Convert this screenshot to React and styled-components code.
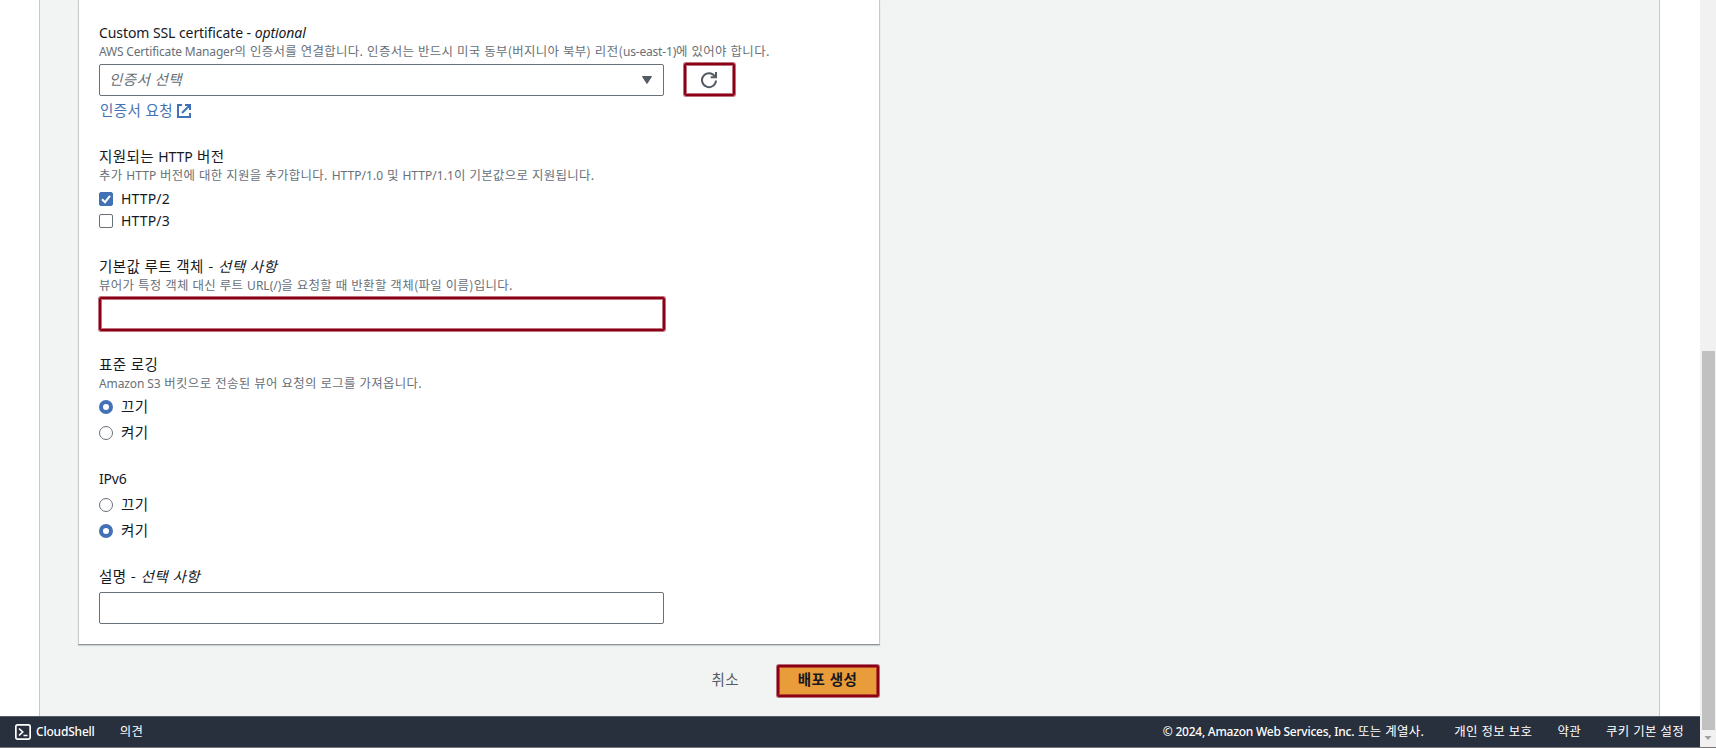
import React from 'react';
import styled, { createGlobalStyle, css } from 'styled-components';

const GlobalStyle = createGlobalStyle`
  * { box-sizing: border-box; }
  body {
    margin: 0;
    overflow: hidden;
    background: #fff;
    color: #16191f;
    font-family: "Noto Sans", "Noto Sans CJK KR", sans-serif;
    font-size: 14px;
  }
`;

const Page = styled.div`
  display: grid;
  grid-template: 716px 31px 1px / 1700px 16px;
  width: 1716px;
  height: 748px;
`;

const Content = styled.main`
  width: 1621px;
  margin-left: 39px;
  padding-left: 39px;
  background: #f2f3f3;
  border: solid #c6c9ca;
  border-width: 0 1px;
  height: 716px;
`;

const Card = styled.section`
  display: flex;
  flex-direction: column;
  align-items: flex-start;
  width: 802px;
  height: 645px;
  margin-left: -1px;
  padding: 23px 0 0 20px;
  background: #fff;
  border: 1px solid #c6cacb;
  border-top: 0;
  border-bottom-color: #8d9299;
  box-shadow: 0 1px 1px rgba(0, 28, 36, 0.15);
`;

const Field = styled.div`
  display: flex;
  flex-direction: column;
  align-items: flex-start;
  height: ${(p) => p.$height}px;
`;

const Gap = styled.div`
  height: ${(p) => p.$height}px;
`;

const Label = styled.div`
  height: 20px;
  line-height: ${(p) => (p.$low ? 22 : 20)}px;
  font-size: 14px;
  white-space: nowrap;
`;

const Hint = styled.div`
  height: ${(p) => p.$height}px;
  line-height: ${(p) => (p.$high ? 18 : 20)}px;
  font-size: 12px;
  color: #687078;
  white-space: nowrap;
`;

const Latin = styled.span`
  letter-spacing: ${(p) => p.$track}px;
  font-weight: ${(p) => p.$weight};
`;

const Hangul = styled.span`
  font-family: "Noto Sans CJK KR", sans-serif;
  font-size: 1.038em;
  line-height: 1;
  letter-spacing: 0.026em;
  word-spacing: 0.05em;
`;

const Optional = styled.span`
  font-style: italic;
`;

function Text({ children, track = -0.1, weight = 'inherit' }) {
  const runs = children.match(/[A-Za-z0-9©][\x21-\x7e ]*[\x21-\x7e]|[^A-Za-z0-9©]+/g);
  return runs.map((run, i) =>
    /^[A-Za-z0-9©]/.test(run) ? (
      <Latin key={i} $track={track} $weight={weight}>{run}</Latin>
    ) : (
      <Hangul key={i}>{run}</Hangul>
    )
  );
}

const InputRow = styled.div`
  display: flex;
  align-items: flex-start;
  gap: 19px;
`;

const Control = styled.div`
  display: flex;
  align-items: center;
  justify-content: space-between;
  width: 565px;
  height: 32px;
  padding: 0 11px 1px 9px;
  border: 1px solid #687078;
  border-radius: 2px;
  color: #687078;
  font-style: italic;
`;

const marked = css`
  border: 2px solid #8b0016;
  border-radius: 2px;
  box-shadow: inset 0 0 0 1px rgba(139, 0, 22, 0.55), 0 0 0 1px rgba(139, 0, 22, 0.55);
`;

const MarkedInput = styled.div`
  width: 566px;
  height: 34px;
  ${marked}
`;

const RefreshButton = styled.div`
  display: flex;
  align-items: center;
  justify-content: center;
  width: 51px;
  height: 33px;
  margin-top: -1px;
  margin-left: 1px;
  padding-right: 1px;
  ${marked}
`;

const LinkRow = styled.div`
  display: flex;
  align-items: center;
  gap: 4px;
  height: 20px;
  margin-top: 4px;
  padding: 1px 0 0 1px;
  line-height: 20px;
  color: #4272b5;
`;

const Choice = styled.div`
  display: flex;
  align-items: center;
  gap: 8px;
  height: ${(p) => p.$height}px;
  line-height: 20px;
`;

const CheckBox = styled.span`
  display: flex;
  width: 14px;
  height: 14px;
  border: 1px solid ${(p) => (p.$on ? '#4272b5' : '#687078')};
  border-radius: 2px;
  background: ${(p) => (p.$on ? '#4272b5' : '#fff')};
`;

const Radio = styled.span`
  width: 14px;
  height: 14px;
  border: ${(p) => (p.$on ? '4px solid #4272b5' : '1px solid #687078')};
  border-radius: 50%;
  background: #fff;
`;

const Actions = styled.div`
  display: flex;
  align-items: center;
  justify-content: flex-end;
  width: 801px;
  height: 72px;
  gap: 38px;
`;

const Cancel = styled.span`
  color: #545b64;
  line-height: 20px;
  padding-bottom: 3px;
`;

const Submit = styled.div`
  display: flex;
  align-items: center;
  justify-content: center;
  width: 102px;
  height: 32px;
  margin-right: 1px;
  padding: 0 1px 3px 0;
  background: #e99c3a;
  font-weight: 700;
  ${marked}
`;

const Footer = styled.footer`
  display: flex;
  align-items: center;
  padding: 0 16px 1px 15px;
  background: #282f3d;
  border-top: 1px solid #575d68;
  color: #fff;
  font-size: 12px;
  line-height: 18px;
  white-space: nowrap;
`;

const FooterItem = styled.span`
  display: flex;
  align-items: center;
  gap: 5px;
  margin-right: 25px;
`;

const Legal = styled.div`
  display: flex;
  gap: ${(p) => p.$gap}px;
  margin-left: auto;
`;

const Scrollbar = styled.div`
  grid-area: 1 / 2 / 3 / 3;
  display: flex;
  flex-direction: column;
  align-items: center;
  padding-top: 351px;
  background: #f1f1f1;
`;

const Thumb = styled.div`
  width: 13px;
  height: 379px;
  background: #c1c1c1;
`;

const BottomLine = styled.div`
  grid-column: 1 / 3;
  background: #77777a;
`;

const RadioGroup = ({ selected }) =>
  ['끄기', '켜기'].map((name) => (
    <Choice key={name} $height={26}>
      <Radio $on={name === selected} />
      <span><Text>{name}</Text></span>
    </Choice>
  ));

export default function App() {
  return (
    <>
      <GlobalStyle />
      <Page>
        <Content>
          <Card>
            <Field $height={123}>
              <Label><Text track={-0.08}>Custom SSL certificate -</Text> <Optional><Text track={-0.1}>optional</Text></Optional></Label>
              <Hint $height={21} $high>
                <Text track={-0.18}>AWS Certificate Manager의 인증서를 연결합니다. 인증서는 반드시 미국 동부(버지니아 북부) 리전(us-east-1)에 있어야 합니다.</Text>
              </Hint>
              <InputRow>
                <Control>
                  <span><Text>인증서 선택</Text></span>
                  <svg width="10" height="8" viewBox="0 0 10 8"><path d="M0.5 0.5h9L5 7.5z" fill="#545b64" stroke="#545b64" /></svg>
                </Control>
                <RefreshButton>
                  <svg width="18" height="18" viewBox="0 0 18 18" fill="none" stroke="#545b64" strokeWidth="2">
                    <path d="M16 9.5A7 7 0 1 1 14.8 5.2" />
                    <path d="M16 1v5.3h-5.3" />
                  </svg>
                </RefreshButton>
              </InputRow>
              <LinkRow>
                <span><Text>인증서 요청</Text></span>
                <svg width="14" height="14" viewBox="0 0 14 14" fill="none" stroke="#4272b5" strokeWidth="2">
                  <path d="M5 1H1v12h12V9M8 1h5v5M13 1L5 9" />
                </svg>
              </LinkRow>
            </Field>

            <Field $height={110}>
              <Label $low><Text>지원되는 HTTP 버전</Text></Label>
              <Hint $height={22}><Text track={0.05}>추가 HTTP 버전에 대한 지원을 추가합니다. HTTP/1.0 및 HTTP/1.1이 기본값으로 지원됩니다.</Text></Hint>
              <Choice $height={22}>
                <CheckBox $on>
                  <svg width="12" height="12" viewBox="0 0 12 12"><path d="M2 6.2l3 3L10 2.8" fill="none" stroke="#fff" strokeWidth="2" /></svg>
                </CheckBox>
                <span><Text track={0.15}>HTTP/2</Text></span>
              </Choice>
              <Choice $height={22}>
                <CheckBox />
                <span><Text track={0.15}>HTTP/3</Text></span>
              </Choice>
            </Field>

            <Field $height={98}>
              <Label $low><Text>기본값 루트 객체 - </Text><Optional><Text>선택 사항</Text></Optional></Label>
              <Hint $height={21}><Text track={0}>뷰어가 특정 객체 대신 루트 URL(/)을 요청할 때 반환할 객체(파일 이름)입니다.</Text></Hint>
              <MarkedInput />
            </Field>

            <Field $height={115}>
              <Label $low><Text>표준 로깅</Text></Label>
              <Hint $height={20}><Text track={-0.1}>Amazon S3 버킷으로 전송된 뷰어 요청의 로그를 가져옵니다.</Text></Hint>
              <RadioGroup selected="끄기" />
            </Field>

            <Field $height={97}>
              <Label><Text track={-0.2}>IPv6</Text></Label>
              <Gap $height={3} />
              <RadioGroup selected="켜기" />
            </Field>

            <Field $height={60}>
              <Label $low><Text>설명 - </Text><Optional><Text>선택 사항</Text></Optional></Label>
              <Gap $height={6} />
              <Control />
            </Field>
          </Card>
          <Actions>
            <Cancel><Text>취소</Text></Cancel>
            <Submit><span><Text>배포 생성</Text></span></Submit>
          </Actions>
        </Content>

        <Scrollbar>
          <Thumb />
          <svg width="16" height="17" viewBox="0 0 16 17"><path d="M4.5 6h7L8 10z" fill="#a0a0a0" /></svg>
        </Scrollbar>

        <Footer>
          <FooterItem>
            <svg width="16" height="16" viewBox="0 0 16 16" fill="none" stroke="#fff" strokeWidth="1.7">
              <rect x="0.85" y="0.85" width="14.3" height="14.3" rx="1.6" />
              <path d="M4 4.5L7.7 8 4 11.5M8.5 11.5h4" />
            </svg>
            <span><Text track={-0.2} weight={500}>CloudShell</Text></span>
          </FooterItem>
          <FooterItem><span><Text>의견</Text></span></FooterItem>
          <Legal $gap={30}>
            <span><Text track={-0.24} weight={500}>© 2024, Amazon Web Services, Inc. 또는 계열사.</Text></span>
            <Legal $gap={25}>
              <span><Text>개인 정보 보호</Text></span>
              <span><Text>약관</Text></span>
              <span><Text>쿠키 기본 설정</Text></span>
            </Legal>
          </Legal>
        </Footer>
        <BottomLine />
      </Page>
    </>
  );
}
